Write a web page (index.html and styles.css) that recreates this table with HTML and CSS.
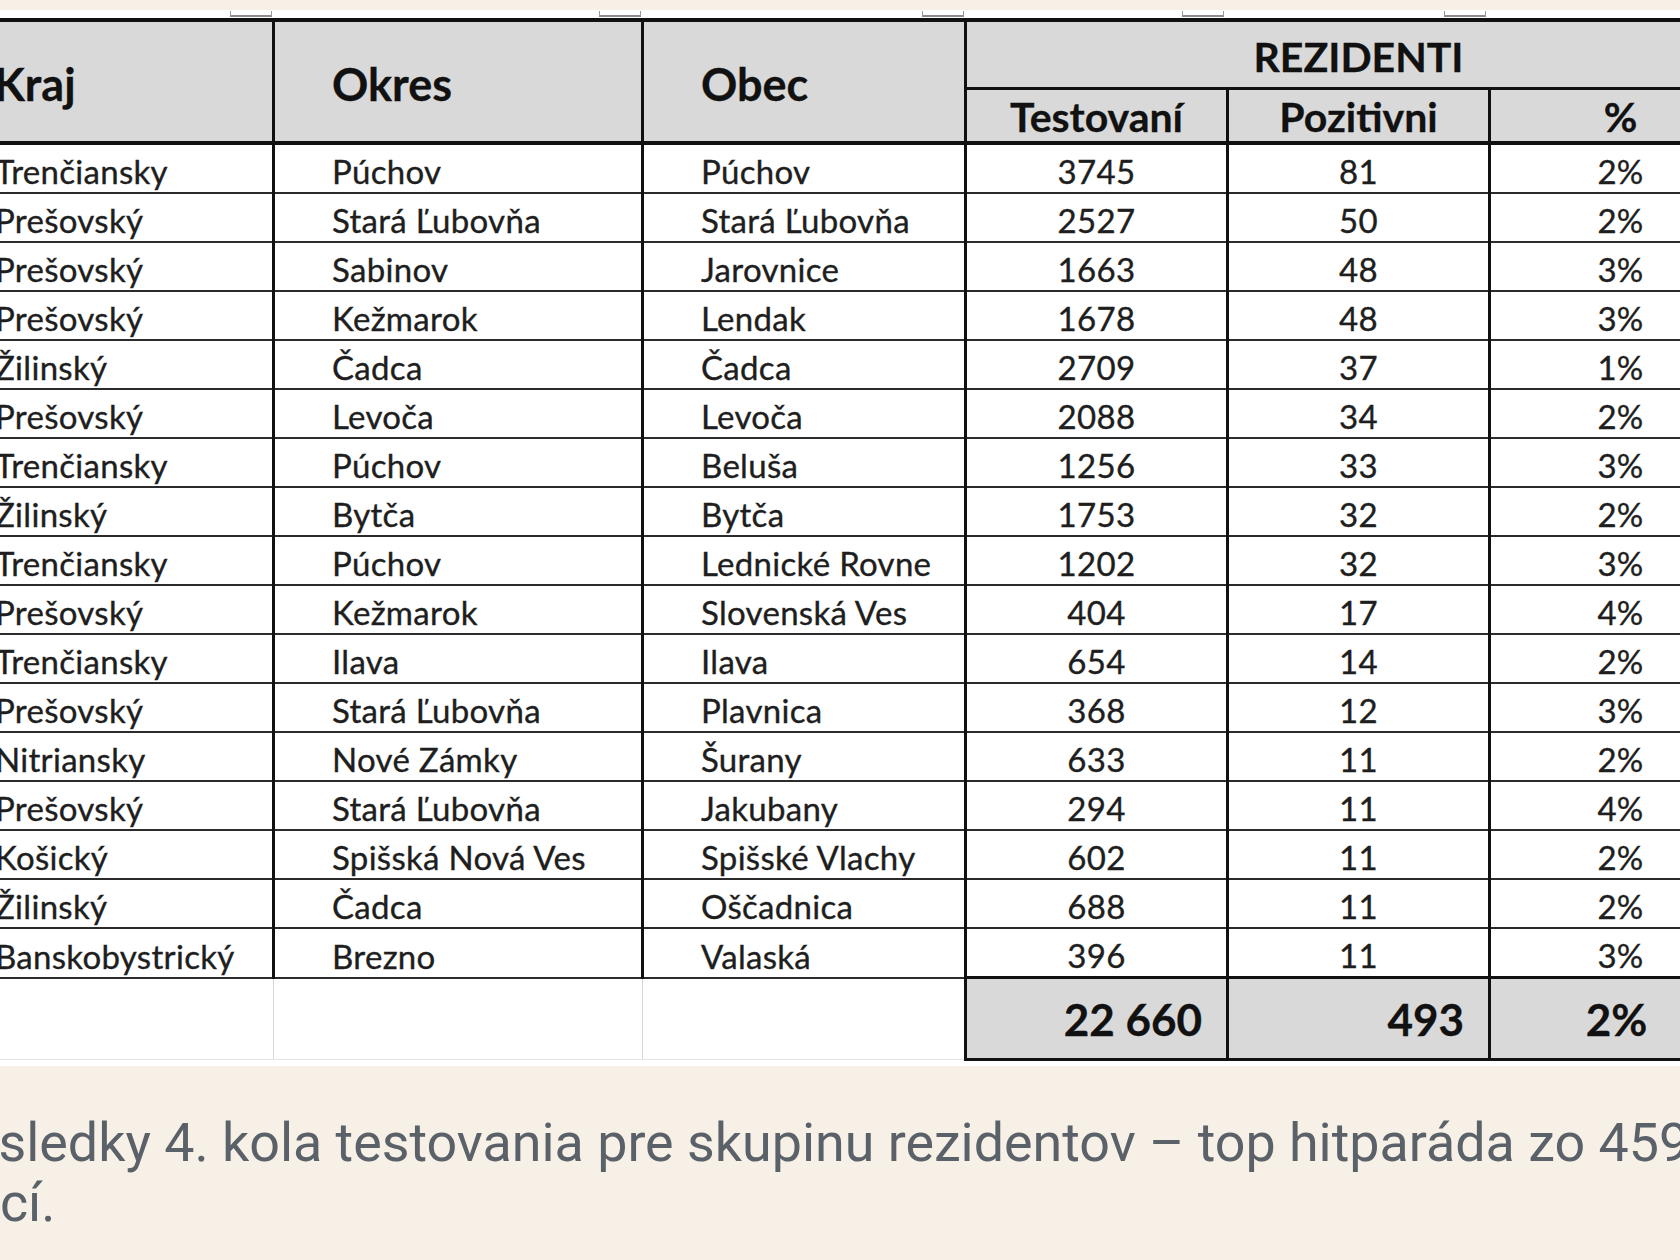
FILE: index.html
```html
<!DOCTYPE html>
<html lang="sk">
<head>
<meta charset="utf-8">
<title>Výsledky 4. kola testovania – rezidenti</title>
<link rel="stylesheet" href="styles.css">
</head>
<body>
<div class="page">
  <div class="sheet">
    <div class="ticks">
      <span class="tick"></span>
      <span class="tick"></span>
      <span class="tick"></span>
      <span class="tick"></span>
      <span class="tick"></span>
      <span></span>
    </div>
    <table class="data">
      <colgroup>
        <col class="c-kraj"><col class="c-okres"><col class="c-obec">
        <col class="c-num"><col class="c-num"><col class="c-num">
      </colgroup>
      <thead>
        <tr class="hr1">
          <th class="h-main first" rowspan="2">Kraj</th>
          <th class="h-main" rowspan="2">Okres</th>
          <th class="h-main" rowspan="2">Obec</th>
          <th class="h-group" colspan="3">REZIDENTI</th>
        </tr>
        <tr class="hr2">
          <th class="h-sub">Testovaní</th>
          <th class="h-sub">Pozitivni</th>
          <th class="h-sub">%</th>
        </tr>
      </thead>
      <tbody>
        <tr><td class="t first">Trenčiansky</td><td class="t">Púchov</td><td class="t">Púchov</td><td class="n">3745</td><td class="n">81</td><td class="n">2%</td></tr>
        <tr><td class="t first">Prešovský</td><td class="t">Stará Ľubovňa</td><td class="t">Stará Ľubovňa</td><td class="n">2527</td><td class="n">50</td><td class="n">2%</td></tr>
        <tr><td class="t first">Prešovský</td><td class="t">Sabinov</td><td class="t">Jarovnice</td><td class="n">1663</td><td class="n">48</td><td class="n">3%</td></tr>
        <tr><td class="t first">Prešovský</td><td class="t">Kežmarok</td><td class="t">Lendak</td><td class="n">1678</td><td class="n">48</td><td class="n">3%</td></tr>
        <tr><td class="t first">Žilinský</td><td class="t">Čadca</td><td class="t">Čadca</td><td class="n">2709</td><td class="n">37</td><td class="n">1%</td></tr>
        <tr><td class="t first">Prešovský</td><td class="t">Levoča</td><td class="t">Levoča</td><td class="n">2088</td><td class="n">34</td><td class="n">2%</td></tr>
        <tr><td class="t first">Trenčiansky</td><td class="t">Púchov</td><td class="t">Beluša</td><td class="n">1256</td><td class="n">33</td><td class="n">3%</td></tr>
        <tr><td class="t first">Žilinský</td><td class="t">Bytča</td><td class="t">Bytča</td><td class="n">1753</td><td class="n">32</td><td class="n">2%</td></tr>
        <tr><td class="t first">Trenčiansky</td><td class="t">Púchov</td><td class="t">Lednické Rovne</td><td class="n">1202</td><td class="n">32</td><td class="n">3%</td></tr>
        <tr><td class="t first">Prešovský</td><td class="t">Kežmarok</td><td class="t">Slovenská Ves</td><td class="n">404</td><td class="n">17</td><td class="n">4%</td></tr>
        <tr><td class="t first">Trenčiansky</td><td class="t">Ilava</td><td class="t">Ilava</td><td class="n">654</td><td class="n">14</td><td class="n">2%</td></tr>
        <tr><td class="t first">Prešovský</td><td class="t">Stará Ľubovňa</td><td class="t">Plavnica</td><td class="n">368</td><td class="n">12</td><td class="n">3%</td></tr>
        <tr><td class="t first">Nitriansky</td><td class="t">Nové Zámky</td><td class="t">Šurany</td><td class="n">633</td><td class="n">11</td><td class="n">2%</td></tr>
        <tr><td class="t first">Prešovský</td><td class="t">Stará Ľubovňa</td><td class="t">Jakubany</td><td class="n">294</td><td class="n">11</td><td class="n">4%</td></tr>
        <tr><td class="t first">Košický</td><td class="t">Spišská Nová Ves</td><td class="t">Spišské Vlachy</td><td class="n">602</td><td class="n">11</td><td class="n">2%</td></tr>
        <tr><td class="t first">Žilinský</td><td class="t">Čadca</td><td class="t">Oščadnica</td><td class="n">688</td><td class="n">11</td><td class="n">2%</td></tr>
        <tr><td class="t first">Banskobystrický</td><td class="t">Brezno</td><td class="t">Valaská</td><td class="n">396</td><td class="n">11</td><td class="n">3%</td></tr>
        <tr class="sum">
          <td class="blank"></td><td class="blank"></td><td class="blank"></td>
          <td class="total">22 660</td><td class="total">493</td><td class="total pct">2%</td>
        </tr>
      </tbody>
    </table>
  </div>
  <p class="caption">Výsledky 4. kola testovania pre skupinu rezidentov – top hitparáda zo 459 obcí.</p>
</div>
</body>
</html>
```
FILE: styles.css
```css
html, body {
  margin: 0;
  padding: 0;
}
body {
  background: #f6f0e6;
  overflow: hidden;
  width: 1680px;
  height: 1260px;
}
.page {
  margin-left: -58px;
  width: 1806px;
}
.sheet {
  margin-top: 10px;
  background: #ffffff;
  padding-bottom: 5px;
}
.ticks {
  display: grid;
  grid-template-columns: 330px 369px 323px 260px 262px 262px;
  height: 8px;
}
.tick {
  justify-self: end;
  width: 40px;
  height: 4px;
  margin-top: 1px;
  border: 1px solid #9a9a9a;
  border-top: none;
  border-bottom: 2px solid #8c8c8c;
}
.data {
  table-layout: fixed;
  width: 1806px;
  border-collapse: collapse;
  font-family: Lato, "Open Sans", sans-serif;
  color: #1e1e1e;
  border-top: 4px solid #111;
}
.c-kraj { width: 330px; }
.c-okres { width: 369px; }
.c-obec { width: 323px; }
.c-num { width: 262px; }
.data th {
  background: #d9d9d9;
  border: 3px solid #111;
  font-weight: 700;
  padding: 0;
  color: #111;
  -webkit-text-stroke: 0.3px #111;
}
.data th.h-main {
  font-size: 45px;
  text-align: left;
  padding-left: 57px;
  padding-top: 4px;
  border-bottom-width: 4px;
  vertical-align: middle;
}
.data th.h-main.first {
  padding-left: 49px;
}
.hr1 .h-group {
  height: 61px;
  font-size: 41px;
  text-align: center;
  vertical-align: middle;
  padding-top: 4px;
}
.hr2 .h-sub {
  height: 46px;
  font-size: 41px;
  text-align: center;
  vertical-align: middle;
  border-bottom-width: 4px;
  padding-top: 2px;
}
.data td {
  height: 43px;
  padding: 0 0 4px;
  font-size: 33px;
  line-height: 33px;
  letter-spacing: 0.3px;
  vertical-align: bottom;
  border-left: 3px solid #111;
  border-right: 3px solid #111;
  border-top: 2px solid #2b2b2b;
  border-bottom: 2px solid #2b2b2b;
  white-space: nowrap;
  -webkit-text-stroke: 0.35px #1e1e1e;
}
.data td.t {
  text-align: left;
  padding-left: 57px;
}
.data td.t.first {
  padding-left: 50px;
}
.data td.n {
  text-align: center;
}
.data .sum td {
  height: 79px;
  padding: 0;
  vertical-align: middle;
}
.data .sum td.blank {
  background: #fff;
  border-left: 1px solid #d6d6d6;
  border-right: 1px solid #d6d6d6;
  border-bottom: 1px solid #e4e4e4;
}
.data .sum td.total {
  background: #d9d9d9;
  border: 3px solid #111;
  font-size: 44px;
  font-weight: 700;
  line-height: 44px;
  letter-spacing: 0;
  text-align: right;
  padding-right: 24px;
  color: #111;
  -webkit-text-stroke: 0.3px #111;
}
.data .sum td.total.pct {
  text-align: center;
  padding-right: 8px;
}
.caption {
  margin: 47px 0 0 -3px;
  font-family: Roboto, "Liberation Sans", sans-serif;
  font-size: 53.8px;
  line-height: 60px;
  color: #5b6168;
}
```
